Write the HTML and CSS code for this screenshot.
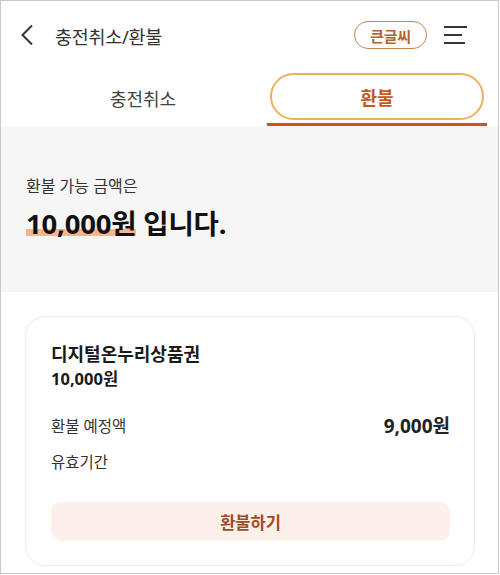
FILE: index.html
```html
<!DOCTYPE html>
<html lang="ko">
<head>
<meta charset="utf-8">
<link rel="stylesheet" href="styles.css">
</head>
<body>
<div class="frame">
  <header class="topbar">
    <div class="left">
      <svg class="back" width="14" height="22" viewBox="0 0 14 22"><path d="M12 1.5 L2.5 11 L12 20.5" fill="none" stroke="#333" stroke-width="2"/></svg>
      <h1 class="title">충전취소/환불</h1>
    </div>
    <div class="right">
      <span class="bigfont">큰글씨</span>
      <svg class="menu" width="26" height="20" viewBox="0 0 26 20"><path d="M1 2 H24 M1 10 H19 M1 18 H22" stroke="#333" stroke-width="2"/></svg>
    </div>
  </header>
  <nav class="tabs">
    <div class="tab">충전취소</div>
    <div class="tab active"><span class="pill">환불</span></div>
  </nav>
  <section class="summary">
    <p class="label">환불 가능 금액은</p>
    <p class="amount"><span class="hl">10,000원</span> 입니다.</p>
  </section>
  <section class="cardwrap">
    <div class="card">
      <div class="name">디지털온누리상품권</div>
      <div class="face">10,000원</div>
      <div class="row row1"><span>환불 예정액</span><span class="val">9,000원</span></div>
      <div class="row"><span>유효기간</span><span></span></div>
      <button class="btn">환불하기</button>
    </div>
  </section>
</div>
</body>
</html>
```
FILE: styles.css
```css
* { box-sizing: border-box; }
html, body { margin: 0; padding: 0; background: #fff; }
body { font-family: "Noto Sans", "Noto Sans CJK KR", sans-serif; color: #222; }
.frame {
  width: 499px; height: 574px;
  border: 1px solid #c8c8c8;
  overflow: hidden;
  display: flex; flex-direction: column;
}
.topbar {
  height: 70px; display: flex; align-items: center; justify-content: space-between;
  padding: 0 29px 0 19px;
}
.left { display: flex; align-items: center; gap: 21px; }
.back { display: block; margin-top: -1px; }
.title { margin: 0; font-size: 18.5px; font-weight: 400; color: #333; letter-spacing: -0.3px; }
.right { display: flex; align-items: center; gap: 16px; }
.bigfont {
  display: inline-flex; align-items: center; justify-content: center;
  width: 73px; height: 28px; border: 1.5px solid #c9814c; border-radius: 14px;
  font-size: 15px; font-weight: 700; color: #b2632c; margin-top: -1px; letter-spacing: -0.3px;
}
.menu { display: block; margin-top: -1px; }
.tabs { display: flex; height: 56px; padding: 0 11px 0 18px; gap: 0; }
.tab {
  flex: 1; display: flex; align-items: center; justify-content: center;
  font-size: 18px; color: #444; padding-bottom: 2px;
}
.tab:first-child { flex: 0 0 248px; }
.tab.active {
  flex: 1; border-bottom: 3px solid #c9561c; padding: 2px 3px 3px;
}
.pill {
  width: 100%; height: 100%;
  display: flex; align-items: center; justify-content: center;
  border: 2px solid #efb05c; border-radius: 24px;
  color: #c8561c; font-weight: 700; font-size: 18px;
}
.summary {
  background: #f6f6f6; height: 166px; padding: 48px 25px 0;
}
.label { margin: 0; font-size: 16px; color: #333; line-height: 24px; }
.amount { margin: 7px 0 0; font-size: 27.5px; font-weight: 700; color: #111; line-height: 38px; letter-spacing: -0.2px; }
.hl { background: linear-gradient(to bottom, transparent 64%, #f7b48f 64%, #f7b48f 84%, transparent 84%); }
.cardwrap { flex: 1; padding: 24px 23px 7px 24px; }
.card {
  height: 250px; border: 1px solid #ececec; border-radius: 20px;
  padding: 24px 24px 0 25px;
}
.name { font-size: 18px; font-weight: 700; line-height: 26px; color: #1a1a1a; }
.face { font-size: 16.5px; font-weight: 700; line-height: 24px; color: #1a1a1a; margin-top: 0; }
.row { display: flex; justify-content: space-between; align-items: center; font-size: 15.5px; color: #333; height: 36px; }
.row1 { margin-top: 16px; }
.val { font-size: 19px; font-weight: 700; color: #222; }
.btn {
  display: block; width: 100%; height: 39px; margin-top: 23px;
  border: none; border-radius: 10px; background: #fdf0ea;
  font-family: inherit; font-size: 16.5px; font-weight: 700; color: #a14c1c;
}
```
